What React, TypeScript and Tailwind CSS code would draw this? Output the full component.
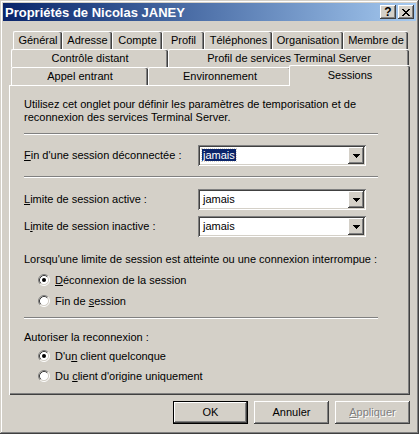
import React from "react";

const raised =
  "shadow-[inset_-1px_-1px_#404040,inset_1px_1px_#ffffff,inset_-2px_-2px_#808080,inset_2px_2px_#d4d0c8]";
const sunken =
  "shadow-[inset_1px_1px_#808080,inset_-1px_-1px_#ffffff,inset_2px_2px_#404040,inset_-2px_-2px_#d4d0c8]";

const row1 = [
  { label: "Général", w: "w-[49px]" },
  { label: "Adresse", w: "w-[50px]" },
  { label: "Compte", w: "w-[50px]" },
  { label: "Profil", w: "w-[42px]" },
  { label: "Téléphones", w: "w-[68px]" },
  { label: "Organisation", w: "w-[71px]" },
  { label: "Membre de", w: "w-[65px]" },
];

const row2 = [
  { label: "Contrôle distant", w: "w-[157px]" },
  { label: "Profil de services Terminal Server", w: "w-[241px]" },
];

const row3 = [
  { label: "Appel entrant", w: "w-[137px]" },
  { label: "Environnement", w: "w-[143px]" },
];

function Tab({ label, w }: { label: string; w: string }) {
  return (
    <div
      className={`${w} flex h-[18px] shrink-0 items-center justify-center rounded-t-[2px] border-l border-t border-white bg-[#d4d0c8] pb-[1px] shadow-[inset_-1px_0_#404040,inset_-2px_0_#808080]`}
    >
      {label}
    </div>
  );
}

function Separator() {
  return <div className="h-[2px] w-[354px] border-t border-b border-t-[#808080] border-b-white" />;
}

function Combo({ selected }: { selected?: boolean }) {
  return (
    <div className={`flex h-[21px] w-[168px] items-center bg-white p-[2px] ${sunken}`}>
      <div className="flex-1 pl-[2px]">
        {selected ? (
          <span className="bg-[#0a246a] px-[1px] text-white outline-1 outline-dotted outline-[#d4d0c8]">jamais</span>
        ) : (
          <span className="pl-[1px]">jamais</span>
        )}
      </div>
      <div className={`flex h-[17px] w-[16px] items-center justify-center bg-[#d4d0c8] ${raised}`}>
        <svg width="7" height="4" viewBox="0 0 7 4" shapeRendering="crispEdges">
          <path d="M0 0h7v1h-1v1h-1v1h-1v1h-1v-1h-1v-1h-1v-1h-1z" fill="#000" />
        </svg>
      </div>
    </div>
  );
}

function Radio({ checked, children }: { checked?: boolean; children: React.ReactNode }) {
  return (
    <div className="ml-[14px] flex h-[14px] items-center">
      <svg width="12" height="12" viewBox="0 0 12 12">
        <circle cx="6" cy="6" r="4.5" fill="#fff" />
        <path d="M2.11 9.89A5.5 5.5 0 0 1 9.89 2.11" stroke="#808080" fill="none" />
        <path d="M9.89 2.11A5.5 5.5 0 0 1 2.11 9.89" stroke="#ffffff" fill="none" />
        <path d="M2.82 9.18A4.5 4.5 0 0 1 9.18 2.82" stroke="#404040" fill="none" />
        <path d="M9.18 2.82A4.5 4.5 0 0 1 2.82 9.18" stroke="#d4d0c8" fill="none" />
        {checked && <circle cx="6" cy="6" r="2" fill="#000" />}
      </svg>
      <span className="ml-[5px]">{children}</span>
    </div>
  );
}

function Button({ children, def, disabled }: { children: React.ReactNode; def?: boolean; disabled?: boolean }) {
  const border = def
    ? "shadow-[inset_0_0_0_1px_#000,inset_-2px_-2px_#404040,inset_2px_2px_#ffffff,inset_-3px_-3px_#808080]"
    : raised;
  return (
    <div
      className={`flex h-[23px] w-[75px] items-center justify-center bg-[#d4d0c8] ${border} ${
        disabled ? "text-[#808080] [text-shadow:1px_1px_0_#ffffff]" : ""
      }`}
    >
      {children}
    </div>
  );
}

export default function App() {
  return (
    <div
      className={`h-[434px] w-[419px] bg-[#d4d0c8] p-[3px] font-['Liberation_Sans',Arial,sans-serif] text-[11px] leading-[13px] text-black shadow-[inset_-1px_-1px_#404040,inset_1px_1px_#d4d0c8,inset_-2px_-2px_#808080,inset_2px_2px_#ffffff]`}
    >
      {/* title bar */}
      <div className="flex h-[18px] items-center bg-linear-to-r from-[#0a246a] to-[#a6caf0] pl-[2px] pr-[2px]">
        <span className="flex-1 text-[13px] font-bold text-white">Propriétés de Nicolas JANEY</span>
        <div className={`flex h-[14px] w-[16px] items-center justify-center bg-[#d4d0c8] ${raised}`}>
          <span className="text-[12px] font-bold leading-none">?</span>
        </div>
        <div className={`ml-[2px] flex h-[14px] w-[16px] items-center justify-center bg-[#d4d0c8] ${raised}`}>
          <svg width="8" height="7" viewBox="0 0 8 7" shapeRendering="crispEdges">
            <path
              d="M0 0h2v1h1v1h2v-1h1v-1h2v1h-1v1h-1v1h-1v1h1v1h1v1h1v1h-2v-1h-1v-1h-2v1h-1v1h-2v-1h1v-1h1v-1h1v-1h-1v-1h-1v-1h-1z"
              fill="#000"
            />
          </svg>
        </div>
      </div>

      {/* tabs */}
      <div className="mt-[10px] ml-[10px] flex">
        {row1.map((t) => (
          <Tab key={t.label} {...t} />
        ))}
      </div>
      <div className="ml-[8px] flex">
        {row2.map((t) => (
          <Tab key={t.label} {...t} />
        ))}
      </div>
      <div className="ml-[8px] flex h-[18px] items-start">
        {row3.map((t) => (
          <Tab key={t.label} {...t} />
        ))}
        <div className="relative z-10 -mt-[2px] -ml-[2px] flex h-[21px] w-[121px] shrink-0 items-start justify-center rounded-t-[2px] border-l border-t border-white bg-[#d4d0c8] pt-[3px] shadow-[inset_-1px_0_#404040,inset_-2px_0_#808080]">
          Sessions
        </div>
      </div>

      {/* page */}
      <div className="ml-[6px] h-[310px] w-[401px] px-[15px] pt-[13px] shadow-[inset_1px_1px_#ffffff,inset_-1px_-1px_#404040,inset_-2px_-2px_#808080]">
        <p className="w-[360px]">
          Utilisez cet onglet pour définir les paramètres de temporisation et de reconnexion des services Terminal
          Server.
        </p>
        <div className="mt-[9px]">
          <Separator />
        </div>

        <div className="mt-[10px] flex items-center">
          <span className="w-[174px]">
            <span className="underline">F</span>in d'une session déconnectée :
          </span>
          <Combo selected />
        </div>
        <div className="mt-[10px]">
          <Separator />
        </div>

        <div className="mt-[11px] flex items-center">
          <span className="w-[174px]">
            <span className="underline">L</span>imite de session active :
          </span>
          <Combo />
        </div>
        <div className="mt-[6px] flex items-center">
          <span className="w-[174px]">
            L<span className="underline">i</span>mite de session inactive :
          </span>
          <Combo />
        </div>

        <p className="mt-[16px]">Lorsqu'une limite de session est atteinte ou une connexion interrompue :</p>
        <div className="mt-[7px]">
          <Radio checked>
            <span className="underline">D</span>éconnexion de la session
          </Radio>
        </div>
        <div className="mt-[7px]">
          <Radio>
            Fin de <span className="underline">s</span>ession
          </Radio>
        </div>
        <div className="mt-[9px]">
          <Separator />
        </div>

        <p className="mt-[12px]">Autoriser la reconnexion :</p>
        <div className="mt-[5px]">
          <Radio checked>
            D'u<span className="underline">n</span> client quelconque
          </Radio>
        </div>
        <div className="mt-[6px]">
          <Radio>
            Du <span className="underline">c</span>lient d'origine uniquement
          </Radio>
        </div>
      </div>

      {/* buttons */}
      <div className="mt-[6px] flex justify-end gap-[6px] pr-[6px]">
        <Button def>OK</Button>
        <Button>Annuler</Button>
        <Button disabled>
          <span className="underline">A</span>ppliquer
        </Button>
      </div>
    </div>
  );
}
